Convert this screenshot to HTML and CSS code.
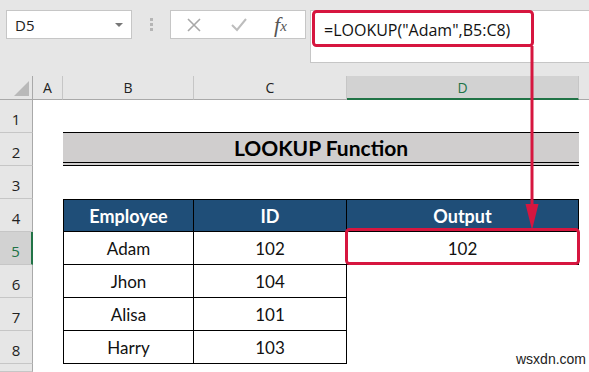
FILE: index.html
```html
<!DOCTYPE html>
<html lang="en">
<head>
    <meta charset="UTF-8">
    <title>LOOKUP Function</title>
    <link rel="stylesheet" href="styles.css">
</head>
<body>
    <div class="toolbar">
        <div class="namebox">
            <span>D5</span>
            <span class="caret"></span>
        </div>
        <div class="grip"><i></i><i></i><i></i></div>
        <div class="fx-buttons">
            <svg width="16" height="16" viewBox="0 0 16 16"><path d="M2 2 L14 14 M14 2 L2 14" stroke="#a8a8a8" stroke-width="1.6" fill="none"/></svg>
            <svg width="18" height="16" viewBox="0 0 18 16"><path d="M2 8 L7 13 L16 2" stroke="#bdbdbd" stroke-width="2" fill="none"/></svg>
            <span class="fx">f<sub>x</sub></span>
        </div>
        <div class="formula">=LOOKUP("Adam",B5:C8)</div>
    </div>

    <div class="sheet">
        <!-- column headers -->
        <div class="corner"><span class="tri"></span></div>
        <div class="colhdr">A</div>
        <div class="colhdr">B</div>
        <div class="colhdr">C</div>
        <div class="colhdr active">D</div>
        <div class="colhdr last"></div>

        <!-- row 1 -->
        <div class="rowhdr">1</div>
        <div></div><div></div><div></div><div></div><div></div>

        <!-- row 2 -->
        <div class="rowhdr">2</div>
        <div></div>
        <div class="title">LOOKUP Function</div>
        <div></div>

        <!-- row 3 -->
        <div class="rowhdr">3</div>
        <div></div><div></div><div></div><div></div><div></div>

        <!-- row 4 -->
        <div class="rowhdr">4</div>
        <div></div>
        <div class="th first">Employee</div>
        <div class="th">ID</div>
        <div class="th">Output</div>
        <div></div>

        <!-- row 5 -->
        <div class="rowhdr active">5</div>
        <div></div>
        <div class="td first">Adam</div>
        <div class="td">102</div>
        <div class="td">102</div>
        <div></div>

        <!-- row 6 -->
        <div class="rowhdr">6</div>
        <div></div>
        <div class="td first">Jhon</div>
        <div class="td">104</div>
        <div></div><div></div>

        <!-- row 7 -->
        <div class="rowhdr">7</div>
        <div></div>
        <div class="td first">Alisa</div>
        <div class="td">101</div>
        <div></div><div></div>

        <!-- row 8 -->
        <div class="rowhdr">8</div>
        <div></div>
        <div class="td first">Harry</div>
        <div class="td">103</div>
        <div></div><div></div>

        <!-- row 9 (cut off) -->
        <div class="rowhdr"></div>
        <div></div><div></div><div></div><div></div><div></div>
    </div>

    <!-- red annotation marks -->
    <svg class="marks" width="589" height="372" viewBox="0 0 589 372">
        <rect x="313.5" y="11.5" width="219" height="34" rx="3" fill="none" stroke="#d6163f" stroke-width="3"/>
        <line x1="532" y1="46" x2="532" y2="212" stroke="#d6163f" stroke-width="3"/>
        <polygon points="525.5,204 538.5,204 532,230" fill="#d6163f"/>
        <rect x="346.5" y="229.5" width="232" height="34" rx="3" fill="none" stroke="#d6163f" stroke-width="3"/>
    </svg>

    <div class="watermark">wsxdn.com</div>
</body>
</html>
```

FILE: styles.css
```css
body {
    margin: 0;
    width: 589px;
    height: 372px;
    overflow: hidden;
    background: #ffffff;
    font-family: Lato, "Open Sans", sans-serif;
    color: #000;
}

/* formula bar */
.toolbar {
    height: 76px;
    background: #e6e6e6;
    display: flex;
    align-items: flex-start;
    padding: 10px 0 0 6px;
    box-sizing: border-box;
}

.namebox {
    width: 126px;
    height: 29px;
    box-sizing: border-box;
    background: #fff;
    border: 1px solid #c6c6c6;
    display: flex;
    align-items: center;
    justify-content: space-between;
    padding: 0 8px 0 8px;
    font-family: "Open Sans", sans-serif;
    font-size: 15px;
    color: #222;
}

.caret {
    width: 0;
    height: 0;
    border-left: 4px solid transparent;
    border-right: 4px solid transparent;
    border-top: 4px solid #777;
}

.grip {
    width: 38px;
    height: 29px;
    display: flex;
    flex-direction: column;
    align-items: center;
    justify-content: center;
    gap: 2px;
}

.grip i {
    width: 3px;
    height: 3px;
    background: #b5b5b5;
}

.fx-buttons {
    width: 136px;
    height: 29px;
    box-sizing: border-box;
    background: #fff;
    border: 1px solid #c6c6c6;
    display: flex;
    align-items: center;
    padding-left: 15px;
    gap: 28px;
}

.fx {
    font-family: "Liberation Serif", serif;
    font-style: italic;
    font-size: 22px;
    line-height: 1;
    color: #555;
    margin-left: -2px;
}

.fx sub {
    font-size: 15px;
    vertical-align: 1px;
}

.formula {
    flex: 1;
    height: 53px;
    margin-left: 4px;
    box-sizing: border-box;
    background: #fff;
    border: 1px solid #c6c6c6;
    border-right: none;
    padding: 8px 0 0 13px;
    font-family: "Open Sans", sans-serif;
    font-size: 16px;
    color: #111;
}

/* sheet grid */
.sheet {
    display: grid;
    grid-template-columns: 33px 30px 131px 153px 232px 10px;
    grid-template-rows: 24px repeat(8, 33px) 8px;
}

.corner, .colhdr {
    background: #e6e6e6;
    border-right: 1px solid #c6c6c6;
    border-bottom: 1px solid #a9a9a9;
    box-sizing: border-box;
    display: flex;
    align-items: center;
    justify-content: center;
    font-family: "Open Sans", sans-serif;
    font-size: 14px;
    color: #222;
}

.corner {
    justify-content: flex-end;
    align-items: flex-end;
    padding: 0 3px 3px 0;
    border-right-color: #a9a9a9;
}

.tri {
    width: 0;
    height: 0;
    border-left: 15px solid transparent;
    border-bottom: 15px solid #b9b9b9;
}

.colhdr.last {
    border-right: none;
}

.colhdr.active {
    background: #d2d2d2;
    color: #217346;
    border-bottom: 2px solid #217346;
}

.rowhdr {
    background: #e6e6e6;
    border-right: 1px solid #a9a9a9;
    border-bottom: 1px solid #c6c6c6;
    box-sizing: border-box;
    display: flex;
    align-items: flex-end;
    justify-content: center;
    padding-bottom: 3px;
    font-family: "Open Sans", sans-serif;
    font-size: 15px;
    color: #222;
}

.rowhdr.active {
    background: #d2d2d2;
    color: #217346;
    border-right: 2px solid #217346;
}

.title {
    grid-column: span 3;
    background: #d0cece;
    border-top: 1px solid #000;
    border-bottom: 4px double #000;
    box-sizing: border-box;
    display: flex;
    align-items: center;
    justify-content: center;
    font-weight: bold;
    font-size: 21px;
    margin-top: -1px;
}

.th, .td {
    display: flex;
    align-items: center;
    justify-content: center;
    box-sizing: border-box;
    border-right: 1px solid #000;
    border-bottom: 1px solid #000;
}

.th {
    background: #1f4e78;
    color: #fff;
    font-weight: bold;
    font-size: 18px;
    border-top: 1px solid #000;
}

.td {
    font-size: 17px;
    color: #111;
}

.first {
    border-left: 1px solid #000;
}

/* overlays */
.marks {
    position: absolute;
    top: 0;
    left: 0;
    pointer-events: none;
}

.watermark {
    position: absolute;
    left: 516px;
    top: 351px;
    font-family: "Liberation Sans", sans-serif;
    font-size: 14px;
    color: #222;
}
```
